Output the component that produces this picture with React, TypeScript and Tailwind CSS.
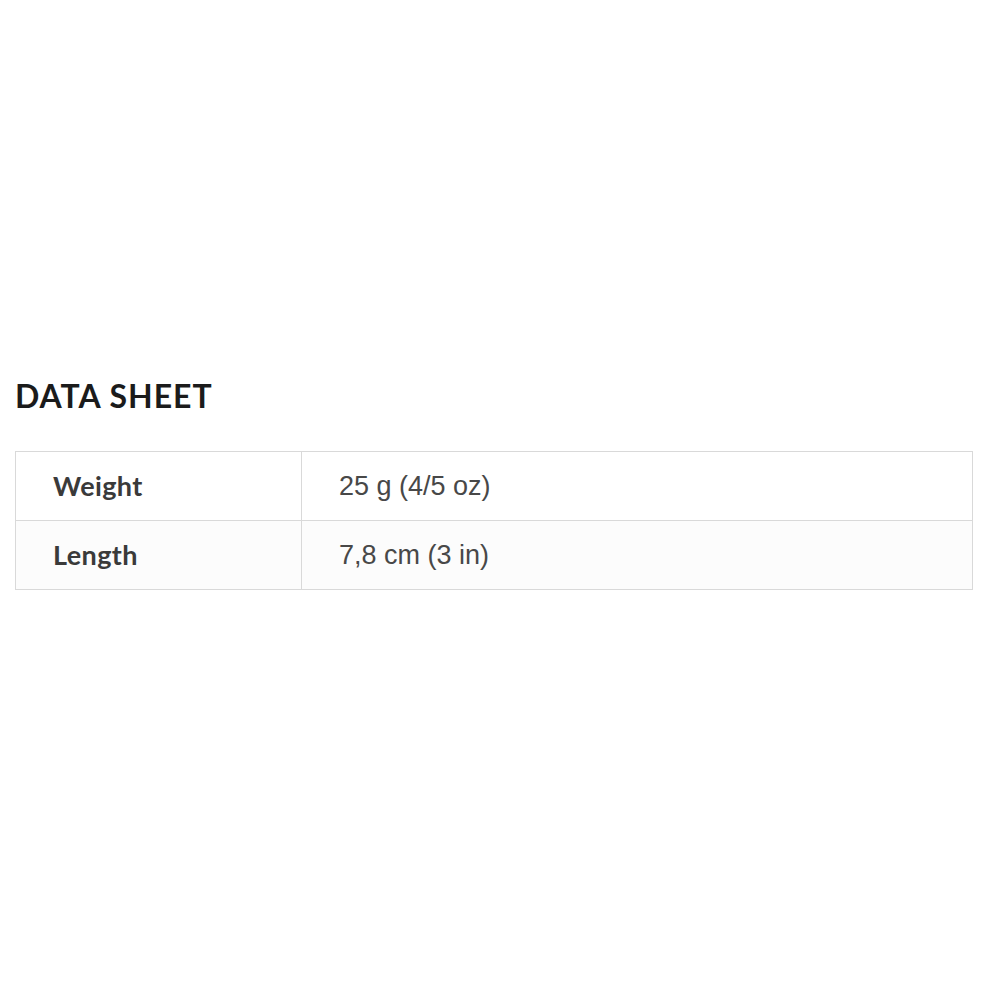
const rows = [
  { label: "Weight", value: "25 g (4/5 oz)" },
  { label: "Length", value: "7,8 cm (3 in)" },
];

export default function App() {
  return (
    <div className="w-[1000px] h-[1000px] bg-white">
      <section className="pt-[375px] pl-[15px] pr-[27px]">
        <h2 className="font-['Lato',sans-serif] font-bold text-[32px] leading-[42px] text-[#1b1b1b] tracking-[1px]">
          DATA SHEET
        </h2>
        <table className="mt-[34px] w-full border-collapse border border-[#d9d9d9]">
          <tbody>
            {rows.map((r, i) => (
              <tr
                key={r.label}
                className={
                  i % 2 === 1
                    ? "bg-[#fcfcfc] border-t border-[#d9d9d9]"
                    : "bg-white"
                }
              >
                <td className="w-[286px] h-[69px] pl-[37px] border-r border-[#d9d9d9] font-['Lato',sans-serif] font-bold text-[27px] tracking-[0.4px] text-[#3a3a3a]">
                  {r.label}
                </td>
                <td className="pl-[37px] font-['Liberation_Sans',Arial,sans-serif] text-[27px] text-[#484848]">
                  {r.value}
                </td>
              </tr>
            ))}
          </tbody>
        </table>
      </section>
    </div>
  );
}
